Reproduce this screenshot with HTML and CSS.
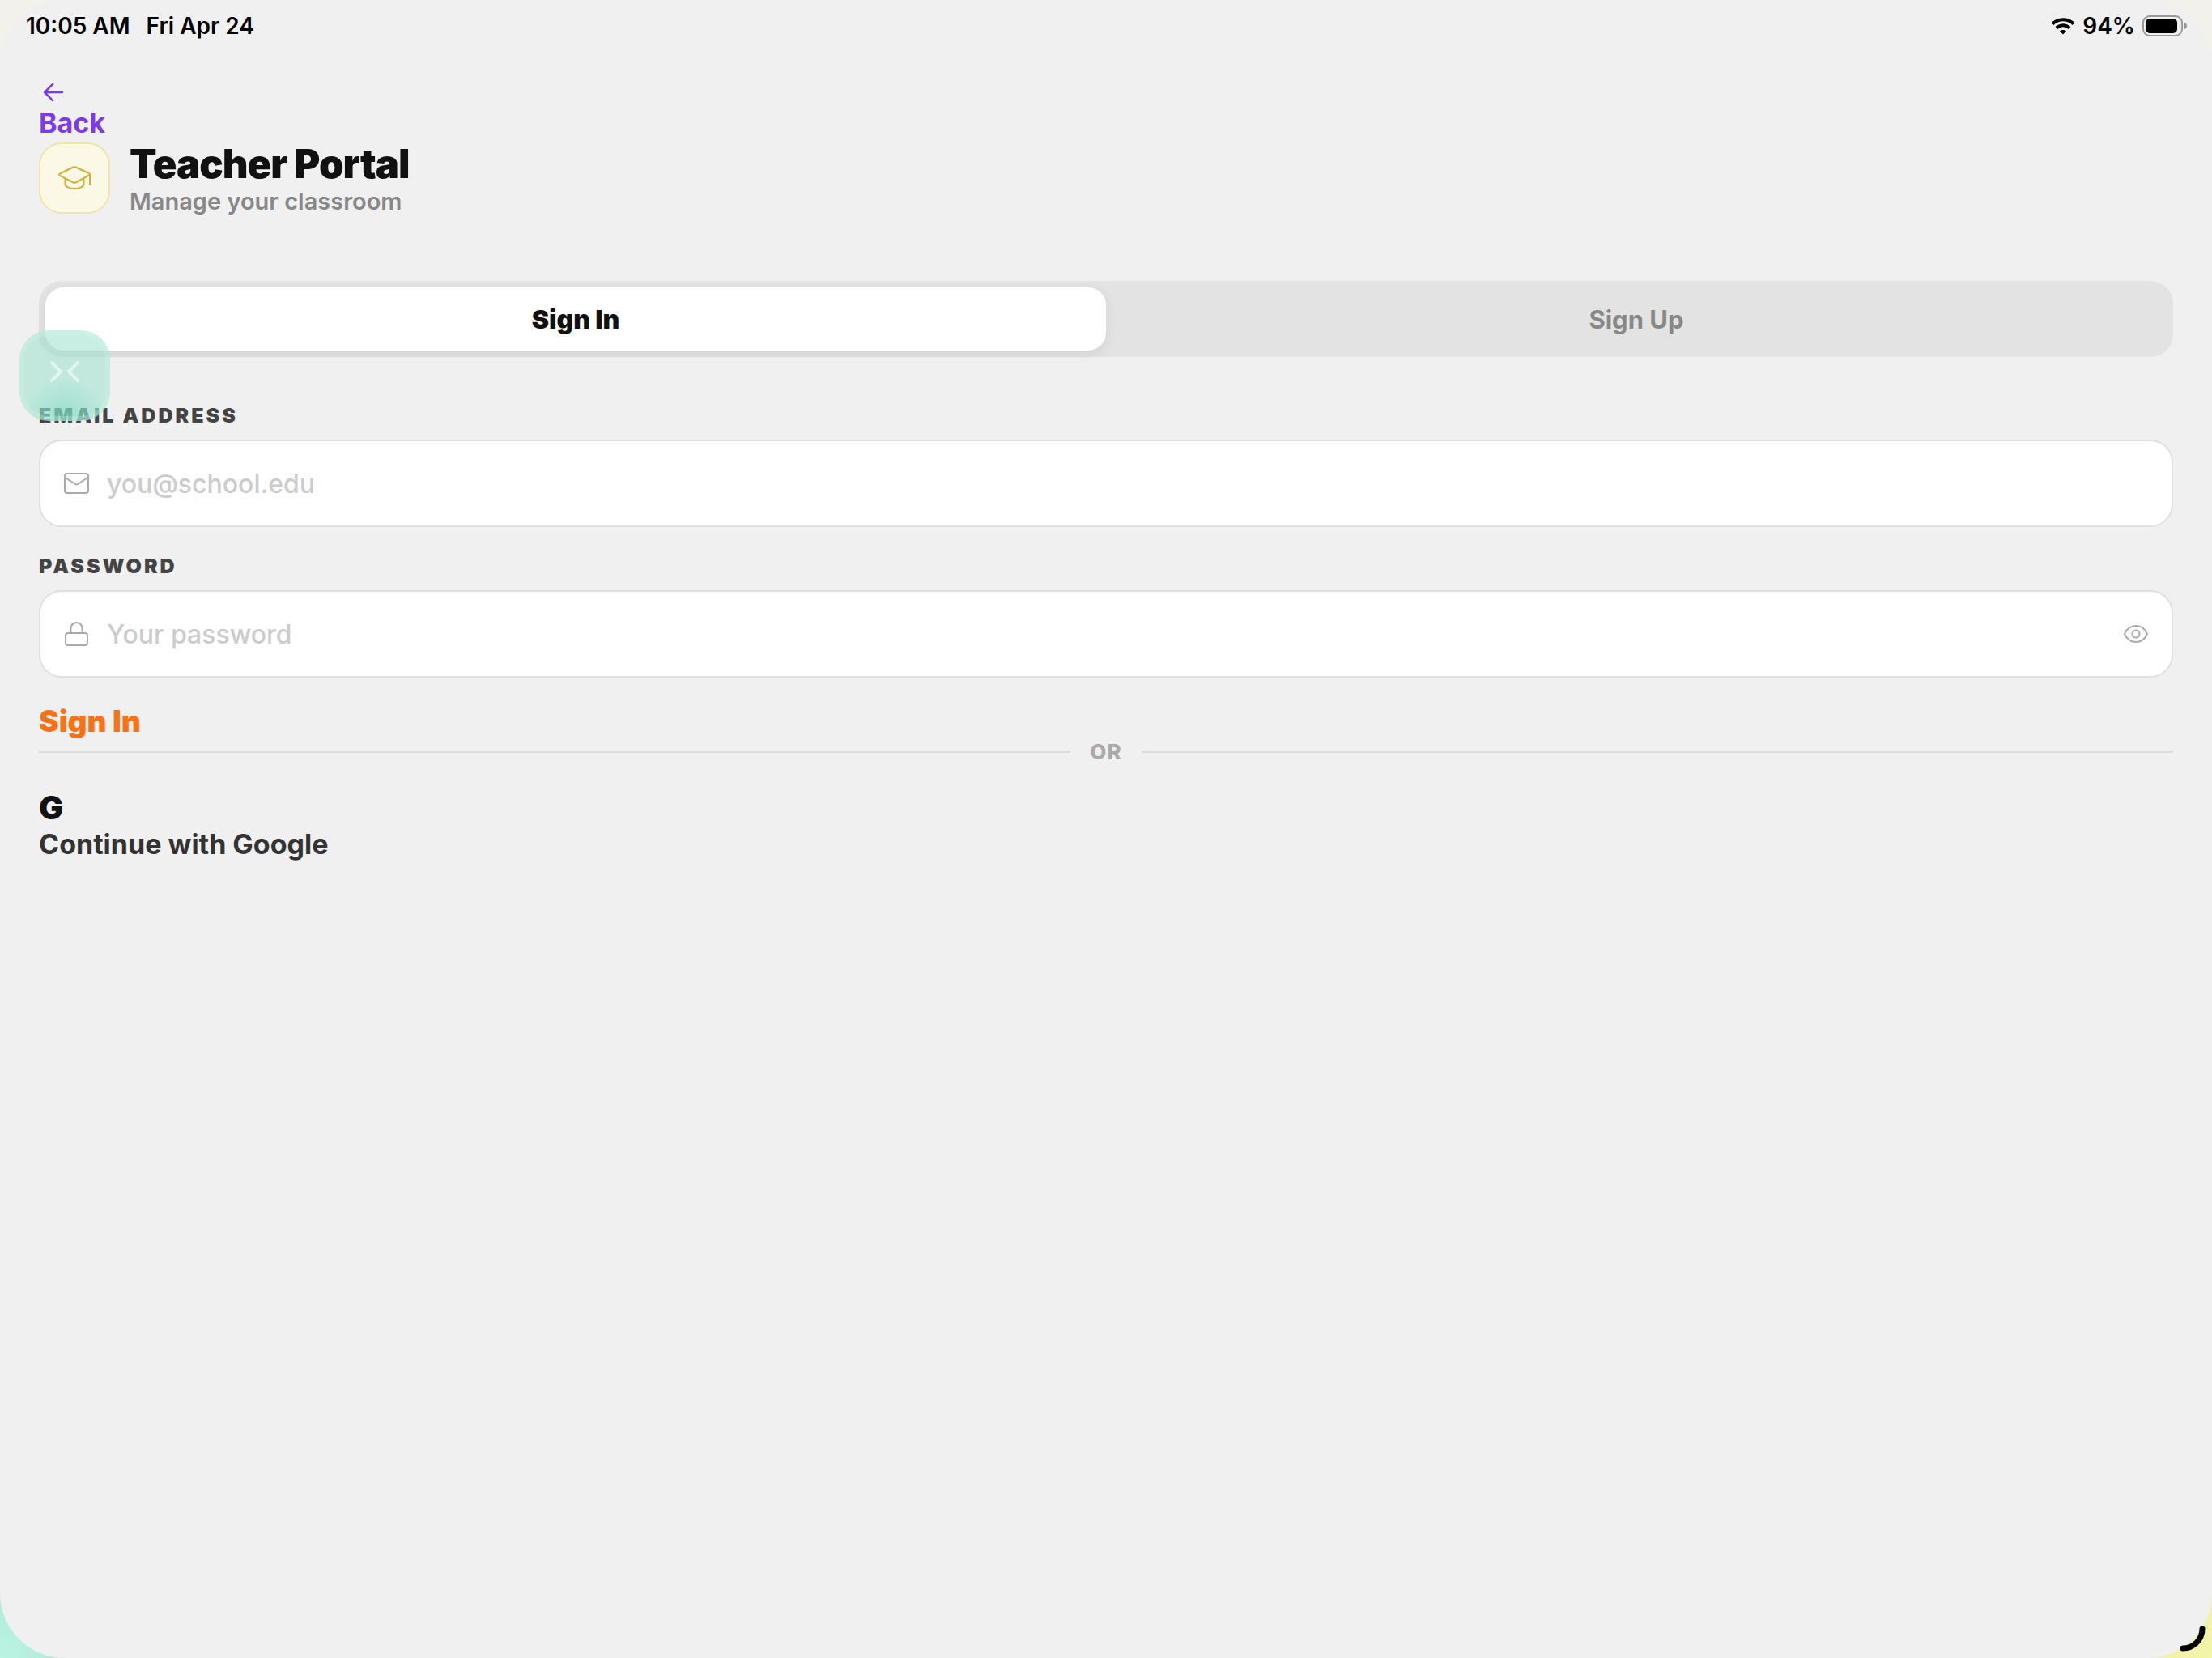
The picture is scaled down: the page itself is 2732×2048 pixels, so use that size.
FILE: index.html
```html
<!DOCTYPE html>
<html lang="en">
<head>
  <meta charset="UTF-8">
  <meta name="viewport" content="width=device-width, initial-scale=1.0">
  <title>Teacher Portal</title>
  <link rel="stylesheet" href="styles.css">
</head>
<body>
  <div class="screen">
    <header class="status-bar">
      <div class="status-left">
        <span>10:05 AM</span>
        <span>Fri Apr 24</span>
      </div>
      <div class="status-right">
        <svg class="wifi" viewBox="0 0 30 21" aria-hidden="true">
          <path d="M2 7.5C9 0.5 21 0.5 28 7.5" />
          <path d="M7 12.5C11.5 8 18.5 8 23 12.5" />
          <path class="wifi-dot" d="M11 16.5C13 14.5 17 14.5 19 16.5L15 20.5Z" />
        </svg>
        <span>94%</span>
        <svg class="battery" viewBox="0 0 56 26" aria-hidden="true">
          <rect class="battery-case" x="1" y="1" width="48" height="24" rx="8" />
          <rect x="4" y="4" width="39" height="18" rx="5" />
          <path class="battery-tip" d="M52 9c4 1 4 7 0 8z" />
        </svg>
      </div>
    </header>

    <main class="portal">
      <a class="back" href="#">
        <svg viewBox="0 0 512 512" aria-hidden="true"><path d="M244 400L100 256l144-144M112 256h300" /></svg>
        <span>Back</span>
      </a>

      <div class="heading">
        <div class="heading-icon">
          <svg viewBox="0 0 44 44" aria-hidden="true">
            <path d="M20.5 8.500a4 4 0 0 1 3 0L40 16q2 1.200 0 2.400L23.500 27.500a4 4 0 0 1-3 0L4 18.900q-2-1.200 0-2.400z" />
            <path d="M10.500 22.500v7c0 3 5 5.500 11.500 5.500s11.500-2.500 11.500-5.500v-7M41 18v12" />
          </svg>
        </div>
        <div>
          <h1>Teacher Portal</h1>
          <p>Manage your classroom</p>
        </div>
      </div>

      <div class="tabs">
        <button class="tab active" type="button">Sign In</button>
        <button class="tab" type="button">Sign Up</button>
        <button class="bubble" type="button" aria-label="Collapse">
          <svg viewBox="0 0 38 26" aria-hidden="true"><path d="M3 2l11 11L3 24M35 2L24 13l11 11" /></svg>
        </button>
      </div>

      <form>
        <label for="email">EMAIL ADDRESS</label>
        <div class="field">
          <svg viewBox="0 0 36 36" aria-hidden="true">
            <rect x="4" y="6" width="29" height="24" rx="3" />
            <path d="M4 10.500L17 19q1.500 1 3 0L33 10.500" />
          </svg>
          <input type="email" id="email" placeholder="you@school.edu">
        </div>

        <label for="password">PASSWORD</label>
        <div class="field">
          <svg viewBox="0 0 36 36" aria-hidden="true">
            <rect x="5" y="17" width="27" height="15" rx="3" />
            <path d="M11.500 17V11a7 7 0 0 1 14 0v6" />
          </svg>
          <input type="password" id="password" placeholder="Your password">
          <button class="eye" type="button" aria-label="Show password">
            <svg viewBox="0 0 36 36" aria-hidden="true">
              <path d="M4 18C7 11 12 8 18 8s11 3 14 10c-3 7-8 10-14 10S7 25 4 18z" />
              <circle cx="18" cy="18" r="4.500" />
            </svg>
          </button>
        </div>

        <button class="submit" type="submit">Sign In</button>
      </form>

      <div class="divider"><span>OR</span></div>

      <button class="google" type="button">
        <span class="google-logo">G</span>
        <span>Continue with Google</span>
      </button>
    </main>

    <svg class="resize-mark" viewBox="0 0 32 32" aria-hidden="true"><path d="M28 4a24 24 0 0 1-24 24" /></svg>
  </div>
</body>
</html>
```

FILE: styles.css
```css
* {
  box-sizing: border-box;
}

body {
  margin: 0;
  font-family: Inter, "Liberation Sans", sans-serif;
  color: #111;
  background:
    radial-gradient(circle at 0 100%, #b9f5e3, #b4e8d8 80px, transparent 300px),
    radial-gradient(circle at 100% 100%, #f2f6a6, #eeeeb0 120px, transparent 300px),
    #f2f1ec;
}

button {
  padding: 0;
  border: none;
  background: none;
  font-family: inherit;
  color: inherit;
  cursor: pointer;
}

svg {
  display: block;
  fill: none;
  stroke: currentColor;
  stroke-linecap: round;
  stroke-linejoin: round;
}

.screen {
  position: relative;
  min-height: 100vh;
  background-color: #f0f0f0;
  border-radius: 80px;
}

.status-bar {
  display: flex;
  justify-content: space-between;
  align-items: center;
  height: 64px;
  padding: 0 30px 0 32px;
  font-size: 28px;
  font-weight: 600;
  color: #000;
}

.status-left {
  display: flex;
  gap: 20px;
}

.status-right {
  display: flex;
  align-items: center;
  gap: 9px;
}

.wifi {
  width: 30px;
  height: 21px;
  stroke-width: 4;
  stroke-linecap: butt;
}

.wifi-dot {
  fill: #000;
  stroke: none;
}

.battery {
  width: 56px;
  height: 26px;
  fill: #000;
  stroke: none;
}

.battery-case {
  fill: none;
  stroke: #999;
  stroke-width: 2;
}

.battery-tip {
  fill: #999;
}

.portal {
  padding: 32px 48px;
}

.back {
  display: block;
  width: 88px;
  font-size: 34px;
  line-height: 40px;
  font-weight: 700;
  color: #7c3aed;
  text-decoration: none;
}

.back svg {
  width: 36px;
  height: 36px;
  stroke-width: 36;
}

.back span {
  display: block;
}

.heading {
  display: flex;
  align-items: flex-start;
  gap: 24px;
  margin-top: 4px;
}

.heading-icon {
  display: flex;
  align-items: center;
  justify-content: center;
  width: 88px;
  height: 88px;
  color: #d4af37;
  background-color: #fcf8e6;
  border: 2px solid #f1e5ab;
  border-radius: 28px;
}

.heading-icon svg {
  width: 44px;
  height: 44px;
  stroke-width: 2;
}

h1 {
  margin: 0;
  font-size: 49px;
  line-height: 54px;
  font-weight: 900;
  letter-spacing: -1px;
}

.heading p {
  margin: 0;
  font-size: 29px;
  line-height: 38px;
  font-weight: 600;
  color: #888;
}

.tabs {
  position: relative;
  display: flex;
  margin-top: 79px;
  padding: 8px;
  background-color: #e3e3e3;
  border-radius: 28px;
}

.tab {
  flex: 1;
  height: 78px;
  font-size: 31px;
  font-weight: 700;
  color: #888;
  border-radius: 22px;
}

.tab.active {
  font-size: 32px;
  font-weight: 900;
  color: #111;
  background-color: #fff;
  box-shadow: 0 4px 16px rgba(0, 0, 0, 0.08);
}

/* floating bubble that sits over the form */
.bubble {
  position: absolute;
  left: -24px;
  top: 61px;
  display: flex;
  justify-content: center;
  width: 112px;
  height: 112px;
  padding-top: 32px;
  color: #e0f5ee;
  background: radial-gradient(circle at 50% 100%, rgba(120, 218, 192, 0.75), rgba(160, 226, 208, 0.58) 54px) border-box;
  border: 6px solid rgba(215, 250, 240, 0.25);
  border-radius: 36px;
}

.bubble svg {
  width: 38px;
  height: 26px;
  stroke-width: 4;
}

form {
  padding-top: 32px;
}

label {
  display: block;
  margin-top: 24px;
  margin-bottom: 14px;
  font-size: 25px;
  line-height: 32px;
  font-weight: 900;
  letter-spacing: 3px;
  color: #444;
}

.field {
  display: flex;
  align-items: center;
  gap: 20px;
  height: 108px;
  margin-bottom: 32px;
  padding: 0 26px;
  color: #aaa;
  background-color: #fff;
  border: 2px solid #e0e0e0;
  border-radius: 28px;
}

.field svg {
  width: 36px;
  height: 36px;
  stroke-width: 2;
}

.field input {
  flex: 1;
  padding: 0;
  border: none;
  outline: none;
  background: none;
  font-family: inherit;
  font-size: 32px;
  font-weight: 500;
  color: #111;
}

.field input::placeholder {
  color: #ccc;
}

.submit {
  display: block;
  font-size: 37px;
  line-height: 44px;
  font-weight: 900;
  color: #f97316;
}

.divider {
  display: flex;
  align-items: center;
  gap: 24px;
  font-size: 26px;
  line-height: 32px;
  font-weight: 800;
  letter-spacing: 1px;
  color: #aaa;
}

.divider::before,
.divider::after {
  content: "";
  flex: 1;
  height: 2px;
  background-color: #ddd;
}

.google {
  display: block;
  margin-top: 29px;
  font-size: 34px;
  line-height: 42px;
  font-weight: 700;
  text-align: left;
  color: #333;
}

.google span {
  display: block;
}

.google .google-logo {
  font-size: 40px;
  line-height: 48px;
  font-weight: 900;
  color: #111;
}

.resize-mark {
  position: absolute;
  right: 8px;
  bottom: 8px;
  width: 32px;
  height: 32px;
  color: #000;
  stroke-width: 7;
}
```
